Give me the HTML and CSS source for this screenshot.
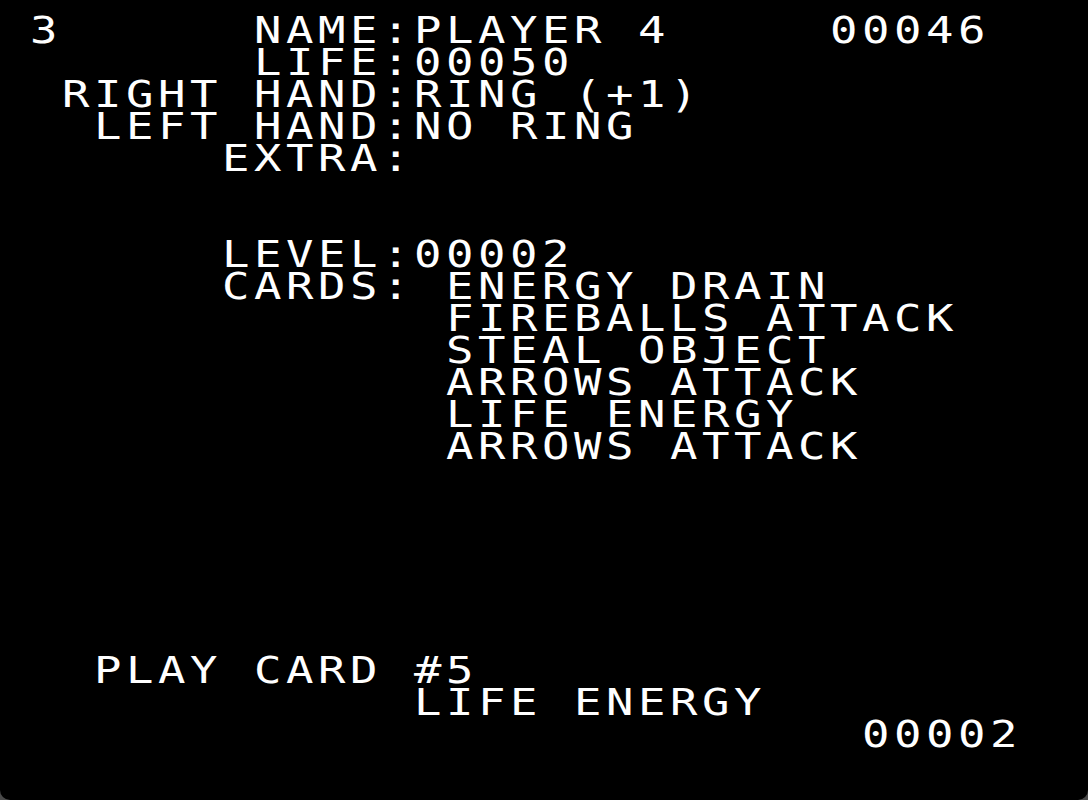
FILE: index.html
```html
<!DOCTYPE html>
<html>
<head>
<meta charset="utf-8">
<link rel="stylesheet" href="styles.css">
</head>
<body>
<div class="screen">
  <div class="text">
    <div class="row">3      NAME:PLAYER 4     00046</div>
    <div class="row">       LIFE:00050</div>
    <div class="row"> RIGHT HAND:RING (+1)</div>
    <div class="row">  LEFT HAND:NO RING</div>
    <div class="row">      EXTRA:</div>
    <div class="row"></div>
    <div class="row"></div>
    <div class="row">      LEVEL:00002</div>
    <div class="row">      CARDS: ENERGY DRAIN</div>
    <div class="row">             FIREBALLS ATTACK</div>
    <div class="row">             STEAL OBJECT</div>
    <div class="row">             ARROWS ATTACK</div>
    <div class="row">             LIFE ENERGY</div>
    <div class="row">             ARROWS ATTACK</div>
    <div class="row"></div>
    <div class="row"></div>
    <div class="row"></div>
    <div class="row"></div>
    <div class="row"></div>
    <div class="row"></div>
    <div class="row">  PLAY CARD #5</div>
    <div class="row">            LIFE ENERGY</div>
    <div class="row">                          00002</div>
    <div class="row"></div>
  </div>
</div>
</body>
</html>
```
FILE: styles.css
```css
html, body {
  margin: 0;
  padding: 0;
  background: #4a4a4a;
}
.screen {
  width: 1088px;
  height: 800px;
  box-sizing: border-box;
  background: #000;
  border-radius: 0 0 10px 10px;
  padding: 14px 0 0 30px;
  overflow: hidden;
}
.text {
  transform: scaleX(1.2);
  transform-origin: 0 0;
  width: 860px;
  color: #fff;
  font-family: "DejaVu Sans Mono", monospace;
  font-size: 38px;
  letter-spacing: calc(26.6667px - 0.60205em);
}
.row {
  height: 32px;
  line-height: 32px;
  white-space: pre;
}
```
